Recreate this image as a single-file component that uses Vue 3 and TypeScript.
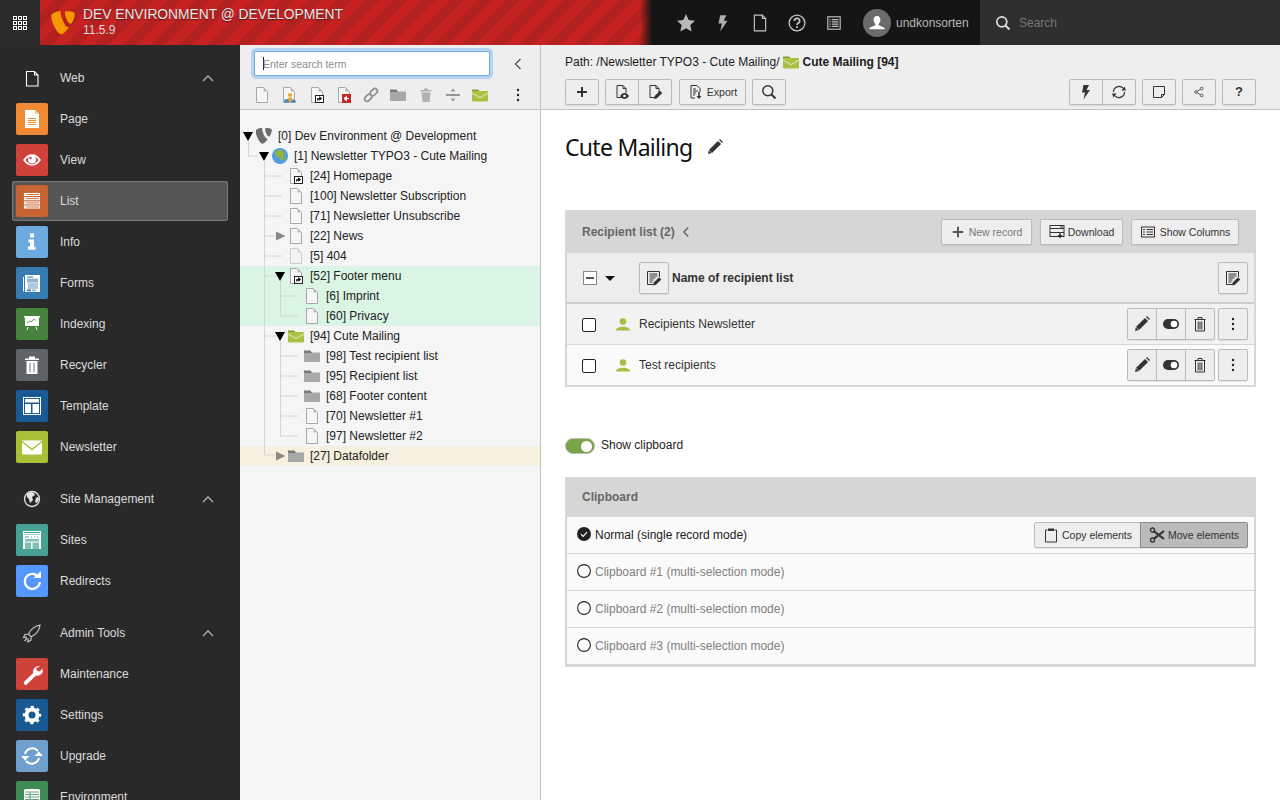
<script setup lang="ts">
const logo = 'M11.9 10.7c-.2.1-.4.1-.7.1-2.1 0-5.1-7.3-5.1-9.7 0-.9.2-1.2.5-1.4C4 0 .9.9 0 2c-.2.3-.3.7-.3 1.3 0 3.8 4 12.4 6.9 12.4 1.3 0 3.5-2.2 5.3-5zM10.5 0c2.7 0 5.3.4 5.3 1.9 0 3-1.9 6.6-2.9 6.6-1.7 0-3.8-4.8-3.8-7.2C9.1.2 9.5 0 10.5 0z'
const pg = '<path d="M2.5.5h7l4 4v11h-11z" fill="#f6f6f6" stroke="#a8a8a8"/><path d="M9.5.5l4 4h-4z" fill="#bbb"/>'
const docO = '<path d="M3 1.5h6l3 3V9M3 1.5v12h5M9 1.5v3h3" fill="none" stroke="#333" stroke-width="1"/>'
const pen = (x: number, y: number, c = '#333') => `<path transform="translate(${x} ${y})" d="M0 9l.7-3L6 .7l2.300 2.300L3 8.300z" fill="${c}"/>`

const icons: Record<string, string> = {
  grid: '<g fill="none" stroke="#fff" stroke-width="1"><rect x="1.5" y="1.5" width="3" height="3"/><rect x="6.5" y="1.5" width="3" height="3"/><rect x="11.5" y="1.5" width="3" height="3"/><rect x="1.5" y="6.5" width="3" height="3"/><rect x="6.5" y="6.5" width="3" height="3"/><rect x="11.5" y="6.5" width="3" height="3"/><rect x="1.5" y="11.5" width="3" height="3"/><rect x="6.5" y="11.5" width="3" height="3"/><rect x="11.5" y="11.5" width="3" height="3"/></g>',
  star: '<path d="M8 0l2.4 5.3 5.6.6-4.2 3.8L13 15.5 8 12.6 3 15.5l1.2-5.8L0 5.9l5.6-.6z" fill="#b9b9b9"/>',
  flash: '<path d="M5.5 1h5.5L8.6 6H12l-6.5 9.5L7 8.5H4z" fill="#333"/>',
  flashLight: '<path d="M5.5 1h5.5L8.6 6H12l-6.5 9.5L7 8.5H4z" fill="#b0b0b0"/>',
  doc: '<path d="M3 1h7l3 3v11H3z M10 1v3h3" fill="none" stroke="#c4c4c4"/>',
  help: '<circle cx="8" cy="8" r="7" fill="none" stroke="#c4c4c4" stroke-width="1.2"/><path d="M5.7 6.2A2.3 2.3 0 1 1 9 8.2c-.7.4-1 .8-1 1.6" fill="none" stroke="#c4c4c4" stroke-width="1.5"/><rect x="7.2" y="10.8" width="1.6" height="1.6" fill="#c4c4c4"/>',
  listLight: '<rect x="2.5" y="2.5" width="11" height="11" fill="none" stroke="#c4c4c4"/><path d="M4 5h1M4 7h1M4 9h1M4 11h1M6 5h6M6 7h6M6 9h6M6 11h6" stroke="#c4c4c4"/>',
  searchLight: '<circle cx="6.8" cy="6.8" r="5" fill="none" stroke="#ddd" stroke-width="1.7"/><path d="M10.5 10.5l4 4" stroke="#ddd" stroke-width="2"/>',
  avatar: '<circle cx="14" cy="14" r="14" fill="#6b6b6b"/><path d="M14 7c2.4 0 3.4 1.8 3.4 3.8 0 1.6-.8 3.2-1.7 4.1v1.3l4.6 2c1 .4 1.4 1.1 1.4 2.1H6.3c0-1 .4-1.7 1.4-2.1l4.6-2v-1.3c-.9-.9-1.7-2.500-1.700-4.100C10.600 8.800 11.600 7 14 7z" fill="#fff"/>',
  back: '<path d="M10 4L6 8l4 4" fill="none" stroke="#555" stroke-width="1"/>',
  pg,
  pgLight: `<g opacity=".55">${pg}</g>`,
  short: pg + '<rect x="6.5" y="8.5" width="8" height="7" fill="#fff" stroke="#222"/><path d="M8.5 13.500v-2H11M10.500 9.800l2.200 1.700-2.200 1.700z" fill="#111" stroke="#111" stroke-width=".8"/>',
  person: pg + '<circle cx="9" cy="8" r="2" fill="#e8a62c"/><path d="M6 15c0-3.500 1-4.500 3-4.500s3 1 3 4.500z" fill="#e8a62c"/><path d="M3 15.500c0-2.500 1-3.500 2.500-3.500 1.500 0 2.500 1 2.500 3.500z" fill="#4a86d0"/><path d="M10 15.500c0-2 1-3 2.500-3s2.500 1 2.500 3z" fill="#4a86d0"/>',
  redpg: pg + '<rect x="6" y="7" width="9" height="9" fill="#c22a2a"/><path d="M8 11.500h5M10.500 9.300l-2.500 2.200 2.500 2.200z" stroke="#fff" fill="#fff"/>',
  link: '<g fill="none" stroke="#8c8c8c" stroke-width="1.7" transform="rotate(-45 8 8)"><rect x="0" y="5.5" width="8" height="5" rx="2.5"/><rect x="8" y="5.5" width="8" height="5" rx="2.5"/></g>',
  folder: '<path d="M0 4.5h16V14H0z" fill="#a8a8a8"/><path d="M0 2.5h6.5L8 5H0z" fill="#787878"/>',
  mail: '<path d="M0 4h16v9.500a1 1 0 0 1-1 1H1a1 1 0 0 1-1-1z" fill="#a9c244"/><path d="M0 2.500h6l1.500 1.500H0z" fill="#7f9b2e"/><path d="M0 5.500l8 4.500 8-4.500v1.300l-8 4.500-8-4.500z" fill="#dbe7a8"/>',
  trashG: '<path d="M2.500 3h11v1.500h-11zM6 1.500h4V3H6zM3.500 5.500h9L11.500 15h-7z" fill="#b0b0b0"/>',
  divide: '<path d="M1 8h14" stroke="#666" stroke-width="1.3"/><path d="M5.500 4.500h5L8 1.500zM5.500 11.500h5L8 14.500z" fill="#999"/>',
  dots: '<circle cx="8" cy="3" r="1.2" fill="#222"/><circle cx="8" cy="8" r="1.2" fill="#222"/><circle cx="8" cy="13" r="1.2" fill="#222"/>',
  globe: '<circle cx="8" cy="8" r="8" fill="#4f9be6"/><path d="M4 2.500l4-1 3 1.500 2 3-2 1.500 1 3-2.500 3-1.500-3.500L5 8.500l-2.500-2zM12.500 9.500l1.500-1 .5 2-1.500 2z" fill="#8fb53a"/>',
  t3g: `<path d="${logo}" fill="#6d6d6d"/>`,
  plus: '<path d="M8 3v10M3 8h10" stroke="#333" stroke-width="2"/>',
  plusG: '<path d="M8 2v12M2 8h12" stroke="#555" stroke-width="2.200"/>',
  docEye: docO + '<path d="M6 12c1.300-2 2.800-3 4.500-3s3.200 1 4.500 3c-1.300 2-2.800 3-4.500 3S7.300 14 6 12z" fill="#333"/><circle cx="10.500" cy="12" r="1.300" fill="#fff"/>',
  docEdit: docO + pen(7, 6),
  export: '<path d="M3 1.500h6l3 3V8M3 1.500V14h4" fill="none" stroke="#333"/><path d="M5 5h3M5 7h5M5 9h3M5 11h2" stroke="#333"/><path d="M11 8v5" stroke="#333" stroke-width="1.500"/><path d="M8.500 12h5L11 15z" fill="#333"/>',
  search: '<circle cx="6.800" cy="6.800" r="5" fill="none" stroke="#333" stroke-width="1.500"/><path d="M10.500 10.500l4 4" stroke="#333" stroke-width="2"/>',
  refresh: '<path d="M2.500 8a5.500 5.500 0 0 1 9.500-3.800M13.500 8A5.500 5.500 0 0 1 4 11.800" fill="none" stroke="#333" stroke-width="1.200"/><path d="M10.500 6.500H15L13.500 2.500zM5.500 9.500H1l1.500 4z" fill="#333"/>',
  note: '<path d="M2.500 2.500h11v8l-3 3h-8z M13.500 10.500h-3v3" fill="none" stroke="#333"/>',
  share: '<circle cx="4" cy="8" r="1.800" fill="none" stroke="#333"/><circle cx="11.500" cy="3.500" r="1.800" fill="none" stroke="#333"/><circle cx="11.500" cy="12.500" r="1.800" fill="none" stroke="#333"/><path d="M5.600 7l4.300-2.600M5.600 9l4.300 2.600" stroke="#333"/>',
  pencil: '<path d="M1 15l.9-4L11 1.900l3.100 3.100L5 14.100zM12 .9l3.100 3.100 .9-1L13 0z" fill="#333"/><path d="M1.900 11l3.100 3.100" stroke="#eee" stroke-width=".6"/>',
  toggle: '<rect x="0" y="3" width="16" height="10" rx="5" fill="#333"/><circle cx="11" cy="8" r="3.300" fill="#fff"/>',
  trash: '<path d="M2.500 3.500h11M6 3.500V1.500h4v2M3.500 3.500v11.500h9V3.500M6.200 5.500v8M8 5.500v8M9.800 5.500v8" fill="none" stroke="#333"/>',
  tableEdit: '<path d="M1.500 1.500h12V7M1.500 1.500V14.500h6" fill="none" stroke="#333"/><path d="M3.500 4h8M3.500 6h8M3.500 8h6M3.500 10h4M3.500 12h3" stroke="#333"/>' + pen(7, 6.5),
  download: '<rect x="1" y="1.500" width="14" height="11" fill="none" stroke="#333"/><path d="M1 4.500h14M1 8.500h14M11 3h3" stroke="#333"/><path d="M11 8v4" stroke="#333" stroke-width="1.400"/><path d="M8.500 11h5L11 14.500z" fill="#333"/>',
  columns: '<rect x="1.500" y="3" width="13" height="10" fill="none" stroke="#333"/><path d="M3 5.500h2M3 8h2M3 10.500h2M6.500 5.500h6.500M6.500 8h6.500M6.500 10.500h6.500" stroke="#333"/>',
  user: '<circle cx="8" cy="5.500" r="3.300" fill="#a8c040"/><path d="M1 14.500c0-2.300 2.500-3 4.800-3.800h4.400c2.300.8 4.800 1.500 4.800 3.800z" fill="#a8c040"/>',
  check: '<circle cx="7" cy="7" r="7" fill="#222"/><path d="M4 7.200l2.100 2.100L10 5.200" fill="none" stroke="#fff" stroke-width="1.200"/>',
  radio: '<circle cx="7" cy="7" r="6.400" fill="none" stroke="#222" stroke-width="1.100"/>',
  clip: '<path d="M4.500 3h-2v12h11V3h-2" fill="none" stroke="#333"/><rect x="5" y="1.500" width="6" height="2.500" fill="#333"/>',
  scissors: '<circle cx="3.500" cy="3" r="2" fill="none" stroke="#333" stroke-width="1.400"/><circle cx="3.500" cy="13" r="2" fill="none" stroke="#333" stroke-width="1.400"/><path d="M5 4.300l10 7.700M5 11.700l10-7.700" stroke="#333" stroke-width="2.200"/>',
  caret: '<path d="M3 6h10L8 11z" fill="#111"/>',
  up: '<path d="M11 19l5-5 5 5" fill="none" stroke="#b0b0b0" stroke-width="1.300"/>',
  open: '<path d="M3 4h10l-5 9z" fill="#000"/>',
  closed: '<path d="M4 3.500l9.500 4.500L4 12.500z" fill="#888"/>',
  /* sidebar, 32 box */
  web: '<path d="M10.500 9.500h8l3.500 3.500v11h-11.500z M18.500 9.500v3.500H22" fill="none" stroke="#fff" stroke-width="1.100"/>',
  site: '<circle cx="16" cy="16" r="7.500" fill="none" stroke="#e4e4e4" stroke-width="1.300"/><path d="M11 11l4-2 3 1 1 2-3 2 1 3-3 3-1-4-2-2zM20 15l2-1 1 2-2 4-2-1z" fill="#e4e4e4"/>',
  rocket: '<path d="M24 8c-5 1-9 3.500-11.500 9l2.800 2.800c5.500-2.500 8-6.500 8.700-11.800zM12.500 17l-3.500.5-1.500 3 3.500-.5M15.300 19.800l-.5 3.500-3 1.500.5-3.500M11 21l-2.500 3" fill="none" stroke="#c8c8c8" stroke-width="1.200"/>',
  mPage: '<path d="M9 7h10l4 4v14H9z" fill="#fff"/><path d="M19 7l4 4h-4z" fill="#f9c89a"/><path d="M12 15.500h8M12 17.500h8M12 19.500h8M12 21.500h8" stroke="#f18a35" stroke-width="1.100"/>',
  mView: '<path d="M7 16c2.500-3.800 5.500-5.700 9-5.700s6.500 1.900 9 5.700c-2.500 3.800-5.500 5.700-9 5.700S9.500 19.800 7 16z" fill="#fff"/><path d="M9.500 16c2-2.700 4-4.200 6.500-4.200s4.500 1.500 6.500 4.200c-2 2.700-4 4.200-6.500 4.200S11.500 18.700 9.500 16z" fill="#d0413a"/><circle cx="16" cy="15.500" r="4" fill="#fff"/><circle cx="14.500" cy="14" r="1.200" fill="#d0413a"/>',
  mList: '<g fill="none" stroke="#fff" stroke-width="1.100"><rect x="8.500" y="8.500" width="15" height="2"/><rect x="8.500" y="12.700" width="15" height="2"/><rect x="8.500" y="16.900" width="15" height="2"/><rect x="8.500" y="21" width="15" height="2"/></g><path d="M10 9v1.500M10 13.200v1.500M10 17.400v1.500M10 21.500V23" stroke="#fff"/>',
  mInfo: '<rect x="14" y="7.500" width="4" height="4" fill="#fff"/><path d="M12.500 13.500H18v7h1.500v3.300h-7.500v-3.300h2v-4h-1.500z" fill="#fff"/>',
  mForms: '<path d="M7 10h1v14.500H7zM9 8h15v17H9z" fill="#fff"/><path d="M11 9.500h6v1h-6z" fill="#377cb0"/><rect x="11" y="11.500" width="11" height="4" fill="#8eb7d4"/><path d="M12 17h10M12 19h10M12 21h10" stroke="#377cb0" stroke-width=".8"/><rect x="11" y="22.500" width="4" height="1.800" fill="#377cb0"/><rect x="16" y="22.500" width="4" height="1.800" fill="#8eb7d4"/>',
  mIdx: '<path d="M8 8h16v1.500H8z" fill="#fff"/><rect x="9" y="9" width="14" height="9" fill="#fff"/><path d="M11 15l2.500-2 1.500 1 2.500-2.500 2 .5" fill="none" stroke="#47833f" stroke-width=".9"/><path d="M12 19l-1 3M20 19l1 3" stroke="#fff"/>',
  mRec: '<path d="M9 9.500h14v1.500H9zM13 7.500h6v2h-6zM10.500 12h11v13h-11z" fill="#fff"/><path d="M14 14v9M18 14v9" stroke="#5f6468" stroke-width=".9"/>',
  mTpl: '<rect x="7.500" y="7.500" width="17" height="17" fill="none" stroke="#fff"/><path d="M9 9h14v3.500H9zM9 14h6v9H9zM16.500 14H23v9h-6.500z" fill="#fff"/>',
  mNews: '<path d="M6 9.500h20V22a1.500 1.500 0 0 1-1.500 1.500h-17A1.500 1.500 0 0 1 6 22z" fill="#fff" /><path d="M6 10.500l10 8 10-8" fill="none" stroke="#a8bf37" stroke-width="1.400"/>',
  mSites: '<path d="M7 7h18v18H7z" fill="#fff"/><path d="M8 8.500h16M9 13h4" stroke="#45a295"/><path d="M8 10h16v.6H8z" fill="#45a295"/><path d="M9 15h14v2.500H9zM9 18.500h6V25H9zM16.500 18.500H23V25h-6.500z" fill="#7fbfb5"/><path d="M15 13h1M18 13h1M21 13h1" stroke="#45a295"/>',
  mRedir: '<path d="M21.500 11a7.500 7.500 0 1 0 2.300 6" fill="none" stroke="#fff" stroke-width="2.200"/><path d="M17.500 13h7.500V6z" fill="#fff"/>',
  mWrench: '<path d="M24.300 8.600a5.300 5.300 0 0 0-7 6.500l-9 8.500a1.900 1.900 0 0 0 2.700 2.700l9-8.800a5.300 5.300 0 0 0 6.500-6.800l-3 2.800-2.700-.9-.6-2.500z" fill="#fff"/>',
  mGear: '<circle cx="16" cy="16" r="5.500" fill="none" stroke="#fff" stroke-width="4"/><circle cx="16" cy="16" r="7.800" fill="none" stroke="#fff" stroke-width="2.800" stroke-dasharray="3 3.125" stroke-dashoffset="1.500"/>',
  mUp: '<path d="M9 14a7.500 7.500 0 0 1 13-3M23 18a7.500 7.500 0 0 1-13 3" fill="none" stroke="#fff" stroke-width="2"/><path d="M18.500 16h8.500l-4.200-4.500zM13.500 16H5l4.200 4.500z" fill="#fff"/>',
  mEnv: '<rect x="8" y="8" width="16" height="13" rx="1.500" fill="#fff"/><path d="M9 11h14M9 13.500h14M9 16h14M9 18.500h14M14 11v9" stroke="#408a56" stroke-width=".8"/><path d="M14 21h4v3h-4z" fill="#fff"/>'
}

type Mod = { label: string; icon: string; color: string; active?: boolean }
type Sec = { label: string; icon: string; items: Mod[] }
const sections: Sec[] = [
  { label: 'Web', icon: 'web', items: [
    { label: 'Page', icon: 'mPage', color: '#f18a35' },
    { label: 'View', icon: 'mView', color: '#d0413a' },
    { label: 'List', icon: 'mList', color: '#c86333', active: true },
    { label: 'Info', icon: 'mInfo', color: '#6daae0' },
    { label: 'Forms', icon: 'mForms', color: '#377cb0' },
    { label: 'Indexing', icon: 'mIdx', color: '#47833f' },
    { label: 'Recycler', icon: 'mRec', color: '#5f6468' },
    { label: 'Template', icon: 'mTpl', color: '#195a95' },
    { label: 'Newsletter', icon: 'mNews', color: '#a8bf37' }
  ] },
  { label: 'Site Management', icon: 'site', items: [
    { label: 'Sites', icon: 'mSites', color: '#45a295' },
    { label: 'Redirects', icon: 'mRedir', color: '#5596ff' }
  ] },
  { label: 'Admin Tools', icon: 'rocket', items: [
    { label: 'Maintenance', icon: 'mWrench', color: '#d0413a' },
    { label: 'Settings', icon: 'mGear', color: '#195a95' },
    { label: 'Upgrade', icon: 'mUp', color: '#6e9fce' },
    { label: 'Environment', icon: 'mEnv', color: '#408a56' }
  ] }
]

const treeTools = ['pg', 'person', 'short', 'redpg', 'link', 'folder', 'trashG', 'divide', 'mail']
const topTools = ['star', 'flashLight', 'doc', 'help', 'listLight']

type Node = { d: number; label: string; icon: string; t?: 'open' | 'closed'; tone?: string }
const nodes: Node[] = [
  { d: 0, label: '[0] Dev Environment @ Development', icon: 't3g', t: 'open' },
  { d: 1, label: '[1] Newsletter TYPO3 - Cute Mailing', icon: 'globe', t: 'open' },
  { d: 2, label: '[24] Homepage', icon: 'short' },
  { d: 2, label: '[100] Newsletter Subscription', icon: 'pg' },
  { d: 2, label: '[71] Newsletter Unsubscribe', icon: 'pg' },
  { d: 2, label: '[22] News', icon: 'pg', t: 'closed' },
  { d: 2, label: '[5] 404', icon: 'pgLight' },
  { d: 2, label: '[52] Footer menu', icon: 'short', t: 'open', tone: 'green' },
  { d: 3, label: '[6] Imprint', icon: 'pg', tone: 'green' },
  { d: 3, label: '[60] Privacy', icon: 'pg', tone: 'green' },
  { d: 2, label: '[94] Cute Mailing', icon: 'mail', t: 'open' },
  { d: 3, label: '[98] Test recipient list', icon: 'folder' },
  { d: 3, label: '[95] Recipient list', icon: 'folder' },
  { d: 3, label: '[68] Footer content', icon: 'folder' },
  { d: 3, label: '[70] Newsletter #1', icon: 'pg' },
  { d: 3, label: '[97] Newsletter #2', icon: 'pg' },
  { d: 2, label: '[27] Datafolder', icon: 'folder', t: 'closed', tone: 'yellow' }
]
const treeLines = 'M8.500 31v15H18M24.500 50v295M24.500 66H42M24.500 86H42M24.500 106H42M24.500 126H36M24.500 146H42M24.500 166H36M40.500 171v35M40.500 186H58M40.500 206H58M24.500 226H36M40.500 231v95M40.500 246H58M40.500 266H58M40.500 286H58M40.500 306H58M40.500 326H58M24.500 345H36'

const recipients = ['Recipients Newsletter', 'Test recipients']
const clips = ['Clipboard #1 (multi-selection mode)', 'Clipboard #2 (multi-selection mode)', 'Clipboard #3 (multi-selection mode)']
</script>

<template>
  <div class="app">
    <header class="top">
      <div class="grid-btn"><svg width="16" height="16" viewBox="0 0 16 16" v-html="icons.grid"></svg></div>
      <div class="brand">
        <svg class="logo" width="24" height="24" viewBox="-.5 0 16.500 16"><path :d="logo" fill="#f49700" /></svg>
        <div class="brand-text">
          <div class="site-name">DEV ENVIRONMENT @ DEVELOPMENT</div>
          <div class="version">11.5.9</div>
        </div>
      </div>
      <div class="toolbar">
        <div v-for="t in topTools" :key="t" class="tool"><svg width="18" height="18" viewBox="0 0 16 16" v-html="icons[t]"></svg></div>
        <svg class="avatar" width="28" height="28" viewBox="0 0 28 28" v-html="icons.avatar"></svg>
        <span class="uname">undkonsorten</span>
      </div>
      <div class="topsearch">
        <svg width="16" height="16" viewBox="0 0 16 16" v-html="icons.searchLight"></svg>
        <span>Search</span>
      </div>
    </header>

    <div class="body">
      <nav class="side">
        <section v-for="s in sections" :key="s.label" class="sec">
          <div class="mod">
            <svg class="mico" width="32" height="32" viewBox="0 0 32 32" v-html="icons[s.icon]"></svg>
            <span class="mlabel">{{ s.label }}</span>
            <svg class="chev" width="32" height="32" viewBox="0 0 32 32" v-html="icons.up"></svg>
          </div>
          <div v-for="m in s.items" :key="m.label" class="mod" :class="{ active: m.active }">
            <svg class="mico boxed" :style="{ background: m.color }" width="32" height="32" viewBox="0 0 32 32" v-html="icons[m.icon]"></svg>
            <span class="mlabel">{{ m.label }}</span>
          </div>
        </section>
      </nav>

      <aside class="tree">
        <div class="tree-head">
          <div class="tree-search-row">
            <div class="tree-input"><i class="cursor"></i>Enter search term</div>
            <svg class="tree-back" width="20" height="20" viewBox="0 0 16 16" v-html="icons.back"></svg>
          </div>
          <div class="tree-tools">
            <svg v-for="(t, i) in treeTools" :key="i" width="16" height="16" viewBox="0 0 16 16" v-html="icons[t]"></svg>
            <svg class="tree-dots" width="16" height="16" viewBox="0 0 16 16" v-html="icons.dots"></svg>
          </div>
        </div>
        <div class="tree-body">
          <div v-for="n in nodes" :key="n.label" class="node" :class="n.tone" :style="{ paddingLeft: n.d * 16 + 'px' }">
            <svg class="tg" width="16" height="16" viewBox="0 0 16 16" v-html="n.t ? icons[n.t] : ''"></svg>
            <svg width="16" height="16" viewBox="0 0 16 16" v-html="icons[n.icon]"></svg>
            <span class="nlabel">{{ n.label }}</span>
          </div>
          <svg class="lines" width="300" height="360" viewBox="0 0 300 360"><path :d="treeLines" fill="none" stroke="#d4d4d4" /></svg>
        </div>
      </aside>

      <main class="main">
        <div class="dochead">
          <div class="path">
            <span>Path: /Newsletter TYPO3 - Cute Mailing/</span>
            <svg width="16" height="16" viewBox="0 0 16 16" v-html="icons.mail"></svg>
            <b>Cute Mailing [94]</b>
          </div>
          <div class="docbar">
            <button class="btn w34"><svg width="16" height="16" viewBox="0 0 16 16" v-html="icons.plus"></svg></button>
            <div class="group wide-after">
              <button class="btn w34"><svg width="16" height="16" viewBox="0 0 16 16" v-html="icons.docEye"></svg></button>
              <button class="btn w34"><svg width="16" height="16" viewBox="0 0 16 16" v-html="icons.docEdit"></svg></button>
            </div>
            <button class="btn export"><svg width="16" height="16" viewBox="0 0 16 16" v-html="icons.export"></svg>Export</button>
            <button class="btn w34"><svg width="16" height="16" viewBox="0 0 16 16" v-html="icons.search"></svg></button>
            <div class="spacer"></div>
            <div class="group">
              <button class="btn w34"><svg width="16" height="16" viewBox="0 0 16 16" v-html="icons.flash"></svg></button>
              <button class="btn w34"><svg width="16" height="16" viewBox="0 0 16 16" v-html="icons.refresh"></svg></button>
            </div>
            <button class="btn w34 wide-after"><svg width="16" height="16" viewBox="0 0 16 16" v-html="icons.note"></svg></button>
            <button class="btn w34"><svg width="12" height="12" viewBox="0 0 16 16" v-html="icons.share"></svg></button>
            <button class="btn w34 q">?</button>
          </div>
        </div>

        <div class="content">
          <div class="title-row">
            <h1>Cute Mailing</h1>
            <svg width="16" height="16" viewBox="0 0 16 16" v-html="icons.pencil"></svg>
          </div>

          <section class="panel">
            <div class="rl-head">
              <b class="heading">Recipient list (2)</b>
              <svg class="rl-back" width="18" height="18" viewBox="0 0 16 16" v-html="icons.back"></svg>
              <div class="spacer"></div>
              <button class="btn lite"><svg width="14" height="14" viewBox="0 0 16 16" v-html="icons.plusG"></svg><span class="muted">New record</span></button>
              <button class="btn dl"><svg width="16" height="16" viewBox="0 0 16 16" v-html="icons.download"></svg>Download</button>
              <button class="btn cols"><svg width="16" height="16" viewBox="0 0 16 16" v-html="icons.columns"></svg>Show Columns</button>
            </div>
            <div class="th">
              <span class="minus"><i></i></span>
              <svg class="thcaret" width="16" height="16" viewBox="0 0 16 16" v-html="icons.caret"></svg>
              <button class="btn sq th-btn"><svg width="16" height="16" viewBox="0 0 16 16" v-html="icons.tableEdit"></svg></button>
              <b class="th-name">Name of recipient list</b>
              <div class="spacer"></div>
              <button class="btn sq"><svg width="16" height="16" viewBox="0 0 16 16" v-html="icons.tableEdit"></svg></button>
            </div>
            <div v-for="r in recipients" :key="r" class="tr">
              <span class="cb"></span>
              <svg class="usr" width="16" height="16" viewBox="0 0 16 16" v-html="icons.user"></svg>
              <span class="rname">{{ r }}</span>
              <div class="spacer"></div>
              <div class="group">
                <button class="btn sq"><svg width="16" height="16" viewBox="0 0 16 16" v-html="icons.pencil"></svg></button>
                <button class="btn sq"><svg width="16" height="16" viewBox="0 0 16 16" v-html="icons.toggle"></svg></button>
                <button class="btn sq"><svg width="16" height="16" viewBox="0 0 16 16" v-html="icons.trash"></svg></button>
              </div>
              <button class="btn sq more"><svg width="16" height="16" viewBox="0 0 16 16" v-html="icons.dots"></svg></button>
            </div>
          </section>

          <div class="show-clip">
            <span class="switch"><i></i></span>
            <span class="show-text">Show clipboard</span>
          </div>

          <section class="panel clipboard">
            <div class="cb-head"><b class="heading">Clipboard</b></div>
            <div class="cb-row first">
              <svg class="rd" width="14" height="14" viewBox="0 0 14 14" v-html="icons.check"></svg>
              <span>Normal (single record mode)</span>
              <div class="spacer"></div>
              <div class="group">
                <button class="btn copy"><svg width="16" height="16" viewBox="0 0 16 16" v-html="icons.clip"></svg>Copy elements</button>
                <button class="btn move"><svg width="16" height="16" viewBox="0 0 16 16" v-html="icons.scissors"></svg>Move elements</button>
              </div>
            </div>
            <div v-for="c in clips" :key="c" class="cb-row">
              <svg class="rd" width="14" height="14" viewBox="0 0 14 14" v-html="icons.radio"></svg>
              <span class="off">{{ c }}</span>
            </div>
          </section>
        </div>
      </main>
    </div>
  </div>
</template>

<style>
html, body { margin: 0; overflow: hidden; }
</style>

<style scoped>
.app { width: 1280px; height: 800px; display: flex; flex-direction: column; overflow: hidden; font: 12px/16px "Liberation Sans", Arial, sans-serif; color: #212121; }
svg { display: block; flex: none; }
.spacer { flex: 1; }

.top { height: 45px; flex: none; display: flex; background: #151515; }
.grid-btn { width: 40px; background: #2a2a2a; display: flex; align-items: center; justify-content: center; }
.brand { width: 612px; display: flex; align-items: center; background: linear-gradient(to right, rgba(21,21,21,0) 600px, #151515 612px), repeating-linear-gradient(135deg, #c72222 0 10px, #b32020 10px 20px); }
.logo { margin-left: 11px; }
.brand-text { margin-left: 8px; margin-top: -3px; }
.site-name { font-size: 13.800px; line-height: 19px; color: #e8e8e8; text-shadow: 0 1px 1px rgba(0,0,0,.5); }
.version { font-size: 12px; line-height: 13px; color: #d8d8d8; }
.toolbar { width: 328px; display: flex; align-items: center; padding-left: 15px; box-sizing: border-box; }
.tool { width: 37px; display: flex; justify-content: center; }
.avatar { margin-left: 11px; }
.uname { margin-left: 5px; color: #b8b8b8; }
.topsearch { flex: 1; background: #2f2f2f; display: flex; align-items: center; padding-left: 15px; color: #777; }
.topsearch span { margin-left: 8px; }

.body { flex: 1; min-height: 0; display: flex; }
.side { width: 240px; flex: none; background: #292929; padding: 13px 12px 0; box-sizing: border-box; overflow: hidden; color: #dcdcdc; }
.sec { margin-bottom: 11px; }
.sec + .sec { padding-top: 1px; }
.mod { height: 40px; margin-bottom: 1px; display: flex; align-items: center; padding-left: 4px; box-sizing: border-box; border-radius: 3px; }
.mod.active { background: #555; box-shadow: inset 0 0 0 1px #7a7a7a; }
.mico.boxed { border-radius: 2px; }
.mlabel { margin-left: 12px; flex: 1; }
.chev { margin-right: 4px; }

.tree { width: 301px; flex: none; background: #f5f5f5; border-right: 1px solid #c3c3c3; box-sizing: border-box; }
.tree-head { height: 65px; box-sizing: border-box; background: #eee; border-bottom: 1px solid #c3c3c3; padding: 6px 0 0 14px; }
.tree-search-row { display: flex; align-items: center; height: 25px; }
.tree-input { width: 236px; height: 25px; box-sizing: border-box; background: #fff; border: 1px solid #6daae0; border-radius: 2px; box-shadow: 0 0 0 3px #b5d2ee; display: flex; align-items: center; padding-left: 8px; font-size: 10.500px; color: #8c8c8c; }
.cursor { width: 1px; height: 13px; background: #222; margin-right: -1px; }
.tree-back { margin-left: 18px; }
.tree-tools { display: flex; align-items: center; gap: 11.300px; margin: 11px 0 0 0; }
.tree-dots { margin-left: 10px; }
.tree-body { position: relative; padding-top: 16px; }
.node { height: 20px; display: flex; align-items: center; }
.node.green { background: #dbf5e4; }
.node.yellow { background: #f6f0de; }
.tg { margin-top: -1px; }
.nlabel { margin-left: 6px; color: #222; }
.lines { position: absolute; left: 0; top: 0; pointer-events: none; }

.main { flex: 1; min-width: 0; background: #fff; }
.dochead { height: 65px; box-sizing: border-box; background: #eee; border-bottom: 1px solid #c3c3c3; padding: 0 24px; }
.path { height: 34px; display: flex; align-items: center; color: #1c1c1c; }
.path svg { margin: 0 4px 0 3px; }
.docbar { display: flex; gap: 6px; }
.wide-after { margin-right: 1px; }
.btn { height: 26px; box-sizing: border-box; padding: 0; margin: 0; display: inline-flex; align-items: center; justify-content: center; gap: 3px; background: #eee; border: 1px solid #bbb; border-radius: 2px; box-shadow: 0 1px 1px rgba(0,0,0,.08); font: 10.500px/14px "Liberation Sans", Arial, sans-serif; color: #333; }
.w34 { width: 34px; }
.export { width: 67px; }
.q { font-size: 13px; font-weight: 700; }
.group { display: flex; }
.group .btn { border-radius: 0; }
.group .btn + .btn { margin-left: -1px; }
.group .btn:first-child { border-radius: 2px 0 0 2px; }
.group .btn:last-child { border-radius: 0 2px 2px 0; }

.content { padding: 20px 24px 0; }
.title-row { height: 34px; display: flex; align-items: center; gap: 14px; margin-bottom: 46px; }
h1 { margin: 0; font: 400 23px/34px "Noto Sans", sans-serif; color: #111; letter-spacing: -.7px; }

.panel { border: 2px solid #d6d6d6; border-top: 0; }
.rl-head { height: 43px; margin: 0 -2px; padding: 0 17px; background: #d6d6d6; display: flex; align-items: center; gap: 8px; }
.rl-back { margin-left: -6px; }
.heading { color: #666; }
.lite { width: 91px; gap: 4px; }
.dl { width: 83px; }
.cols { width: 108px; gap: 4px; }
.muted { color: #777; }
.th { height: 51px; box-sizing: border-box; border-bottom: 2px solid #ccc; background: #ededed; display: flex; align-items: center; padding: 0 6px 0 16px; }
.minus { width: 14px; height: 14px; box-sizing: border-box; border: 1px solid #888; background: #fff; display: flex; align-items: center; justify-content: center; }
.minus i { width: 8px; height: 2px; background: #555; }
.thcaret { margin-left: 5px; width: 16px; }
.th-btn { margin-left: 21px; }
.th-name { margin-left: 3px; color: #333; }
.sq { width: 30px; height: 32px; }
.tr { height: 41px; box-sizing: border-box; border-bottom: 1px solid #d6d6d6; background: #f2f2f2; display: flex; align-items: center; padding: 0 6px 0 15px; }
.tr:last-child { height: 40px; border-bottom: 0; background: #fafafa; }
.cb { width: 14px; height: 14px; box-sizing: border-box; border: 1px solid #222; border-radius: 2px; background: #fff; margin-top: 2px; }
.usr { margin-left: 19px; }
.rname { margin-left: 8px; color: #333; }
.more { margin-left: 3px; }

.show-clip { margin-top: 51px; height: 16px; display: flex; align-items: center; gap: 6px; color: #222; }
.show-text { margin-top: -2px; }
.switch { width: 30px; height: 16px; box-sizing: border-box; border-radius: 8px; background: #79a548; border: 1px solid #b9b9b9; display: flex; align-items: center; justify-content: flex-end; padding-right: 2px; }
.switch i { width: 11px; height: 11px; background: #fff; border-radius: 50%; }
.clipboard { margin-top: 23px; border-bottom-width: 3px; }
.cb-head { height: 40px; margin: 0 -2px; padding: 0 17px; background: #d6d6d6; display: flex; align-items: center; }
.cb-row { height: 37px; box-sizing: border-box; background: #fafafa; border-bottom: 1px solid #d6d6d6; display: flex; align-items: center; gap: 4px; padding: 0 6px 0 10px; color: #222; }
.cb-row:last-child { height: 36px; border-bottom: 0; }
.rd { margin-top: -2px; }
.off { color: #808080; }
.copy { width: 107px; }
.move { width: 108px; background: #bbb; border-color: #8a8a8a; }
</style>
